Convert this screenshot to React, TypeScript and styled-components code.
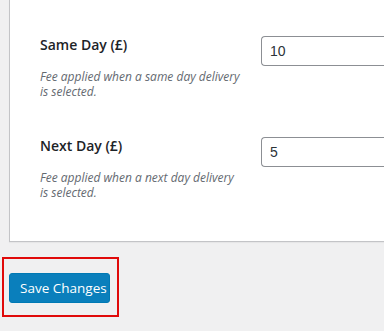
import React from 'react';
import styled, { createGlobalStyle } from 'styled-components';

const GlobalStyle = createGlobalStyle`
  html, body {
    margin: 0;
    padding: 0;
    background: #f0f0f1;
    font-family: "Open Sans", "Noto Sans", sans-serif;
    overflow: hidden;
  }
`;

//fee settings rows ("is selected." kept together so it wraps as one)
const fees = [
  { label: 'Same Day (£)', value: '10', note: 'Fee applied when a same day delivery is\u00A0selected.' },
  { label: 'Next Day (£)', value: '5', note: 'Fee applied when a next day delivery is\u00A0selected.' }
];

export default function App() {
  return (
    <>
      <GlobalStyle />
      <Page>
        <Panel>
          {fees.map((fee) => (
            <Row key={fee.label}>
              <LabelCell>
                <Label>{fee.label}</Label>
                <Note>{fee.note}</Note>
              </LabelCell>
              <Field type="text" defaultValue={fee.value} />
            </Row>
          ))}
        </Panel>
        <Highlight>
          <SaveButton type="button">Save Changes</SaveButton>
        </Highlight>
      </Page>
    </>
  );
}

const Page = styled.div`
  width: 384px;
  height: 331px;
  padding: 0 0 0 9px;
  box-sizing: border-box;
`;

const Panel = styled.div`
  background: #fff;
  border: 1px solid #c3c4c7;
  border-top: none;
  border-right: none;
  box-shadow: 0 1px 1px rgba(0, 0, 0, 0.04);
  padding: 35px 0 41px 30px;
  display: flex;
  flex-direction: column;
  gap: 37px;
`;

const Row = styled.div`
  display: grid;
  grid-template-columns: 221px 1fr;
  align-items: start;
`;

const LabelCell = styled.div`
  display: flex;
  flex-direction: column;
  gap: 14px;
`;

const Label = styled.label`
  font-size: 14px;
  line-height: 20px;
  font-weight: 600;
  color: #1d2327;
`;

const Note = styled.p`
  margin: 0;
  width: 216px;
  font-size: 12px;
  line-height: 15px;
  font-style: italic;
  color: #646970;
`;

const Field = styled.input`
  margin-top: 1px;
  height: 30px;
  box-sizing: border-box;
  width: 100%;
  padding: 0 8px;
  border: 1px solid #8c8f94;
  border-right: none;
  border-radius: 4px 0 0 4px;
  font-family: "Liberation Sans", Arial, sans-serif;
  font-size: 14px;
  color: #2c3338;
  background: #fff;
  outline: none;
`;

const Highlight = styled.div`
  display: inline-block;
  margin: 15px 0 0 -7px;
  padding: 14px 7px 12px 5px;
  border: 2px solid #e00a0a;
`;

const SaveButton = styled.button`
  display: block;
  width: 101px;
  height: 30px;
  padding: 0 10px;
  border: 1px solid #0079b4;
  border-radius: 3px;
  background: #0a7fbc;
  color: #fff;
  font-family: "Open Sans", "Noto Sans", sans-serif;
  font-size: 13.5px;
  cursor: pointer;
  white-space: nowrap;
`;
